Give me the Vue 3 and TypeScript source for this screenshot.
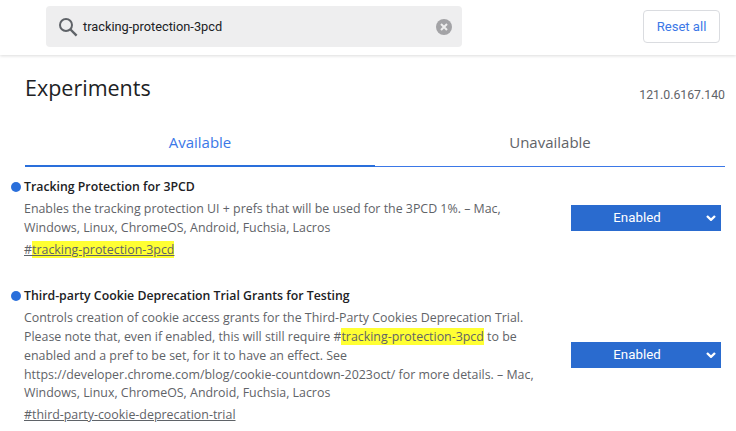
<script setup lang="ts">
const tabs: string[] = ['Available', 'Unavailable']
</script>

<template>
  <div class="page">
    <header class="head">
      <div class="search">
        <svg class="mag" width="20" height="20" viewBox="0 0 20 20" fill="none" stroke="#5f6368" stroke-width="2">
          <circle cx="8" cy="8" r="6" />
          <path d="M12.5 12.5 L18.6 18.6" stroke-width="2.4" />
        </svg>
        <span class="query">tracking-protection-3pcd</span>
        <svg class="clear" width="16" height="16" viewBox="0 0 16 16">
          <circle cx="8" cy="8" r="8" fill="#a3a3a6" />
          <path d="M5 5 L11 11 M11 5 L5 11" stroke="#eee" stroke-width="2" />
        </svg>
      </div>
      <button class="reset">Reset all</button>
    </header>

    <main class="body">
      <div class="title-row">
        <h1>Experiments</h1>
        <span class="version">121.0.6167.140</span>
      </div>
      <nav class="tabs">
        <div v-for="(t, i) in tabs" :key="t" class="tab" :class="{ active: i === 0 }">{{ t }}</div>
      </nav>

      <section class="exp first">
        <div class="info">
          <h2><i class="dot"></i>Tracking Protection for 3PCD</h2>
          <p>Enables the tracking protection UI + prefs that will be used for the 3PCD 1%. – Mac,<br />Windows, Linux, ChromeOS, Android, Fuchsia, Lacros</p>
          <a class="link">#<mark>tracking-protection-3pcd</mark></a>
        </div>
        <div class="sel">Enabled<svg width="10" height="6" viewBox="0 0 10 6"><path d="M1 1 L5 4.8 L9 1" fill="none" stroke="#fff" stroke-width="2.4" /></svg></div>
      </section>

      <section class="exp second">
        <div class="info">
          <h2><i class="dot"></i>Third-party Cookie Deprecation Trial Grants for Testing</h2>
          <p>Controls creation of cookie access grants for the Third-Party Cookies Deprecation Trial.<br />Please note that, even if enabled, this will still require #<mark>tracking-protection-3pcd</mark> to be<br />enabled and a pref to be set, for it to have an effect. See<br />https://developer.chrome.com/blog/cookie-countdown-2023oct/ for more details. – Mac,<br />Windows, Linux, ChromeOS, Android, Fuchsia, Lacros</p>
          <a class="link">#third-party-cookie-deprecation-trial</a>
        </div>
        <div class="sel">Enabled<svg width="10" height="6" viewBox="0 0 10 6"><path d="M1 1 L5 4.8 L9 1" fill="none" stroke="#fff" stroke-width="2.4" /></svg></div>
      </section>
    </main>
  </div>
</template>

<style>
html, body { margin: 0; background: #fff; overflow: hidden; }
</style>

<style scoped>
.page {
  width: 736px;
  height: 431px;
  overflow: hidden;
  font-family: "Open Sans", "Noto Sans", sans-serif;
  color: #5f6368;
}
.head {
  height: 55px;
  box-sizing: border-box;
  padding: 6px 16px 0 46px;
  display: flex;
  justify-content: space-between;
  align-items: flex-start;
  box-shadow: 0 1px 3px rgba(0, 0, 0, 0.14);
}
.search {
  width: 416px;
  height: 41px;
  box-sizing: border-box;
  background: #eeeeef;
  border-radius: 4px;
  padding: 0 10px 0 12px;
  display: flex;
  align-items: center;
  font: 12.8px Roboto, sans-serif;
  color: #202124;
}
.mag { flex: none; }
.query { margin-left: 5px; flex: 1; }
.reset {
  margin-top: 4px;
  width: 77px;
  height: 33px;
  background: #fff;
  border: 1px solid #dadce0;
  border-radius: 4px;
  color: #3b78e7;
  font: 13.1px Roboto, sans-serif;
  padding: 0;
}
.body { padding: 0 11px 0 25px; }
.title-row {
  display: flex;
  justify-content: space-between;
  padding-top: 17px;
  height: 47px;
}
h1 {
  margin: 0;
  font-size: 21.5px;
  line-height: 32px;
  font-weight: 400;
  color: #202124;
}
.version {
  font: 12.3px/16px Roboto, sans-serif;
  color: #5f6368;
  margin-top: 15px;
}
.tabs { display: flex; }
.tab {
  flex: 1;
  height: 48px;
  line-height: 46px;
  text-align: center;
  font-size: 15px;
  color: #5f6368;
  border-bottom: 1px solid #3b78e7;
  box-sizing: border-box;
}
.tab.active { color: #3b78e7; border-bottom: 2px solid #2a6fdb; }
.exp {
  display: flex;
  justify-content: space-between;
  align-items: center;
  margin-right: 4px;
  margin-left: -1px;
}
.first { margin-top: 11px; }
.second { margin-top: 27.4px; }
.info { flex: none; width: 530px; }
h2 {
  margin: 0;
  font-size: 12.3px;
  line-height: 18px;
  font-weight: 550;
  color: #202124;
  position: relative;
}
.dot {
  position: absolute;
  left: -13px;
  top: 4px;
  width: 10px;
  height: 10px;
  border-radius: 50%;
  background: #2a6fdb;
}
p {
  margin: 4.2px 0 0;
  font-size: 12.4px;
  line-height: 18.8px;
  color: #5f6368;
}
.link {
  display: block;
  margin-top: 3px;
  font-size: 12.4px;
  line-height: 18.8px;
  text-decoration: underline;
  color: #5f6368;
}
mark { background: #ffff33; color: inherit; }
.sel {
  width: 150px;
  height: 26px;
  margin-top: -2px;
  background: #2a6bcf;
  color: #fff;
  font: 400 13.3px/26px Roboto, sans-serif;
  text-align: center;
  position: relative;
  padding-right: 18px;
  box-sizing: border-box;
  flex: none;
}
.sel svg { position: absolute; right: 5px; top: 10px; }
</style>
